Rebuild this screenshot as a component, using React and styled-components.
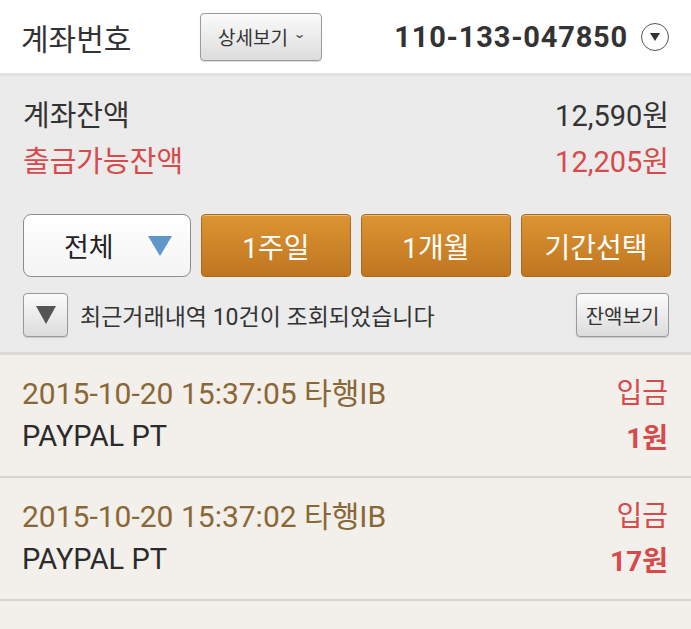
import React from "react";
import styled, { createGlobalStyle } from "styled-components";

const Global = createGlobalStyle`
  html, body {
    margin: 0;
    padding: 0;
    background: #f3efea;
    overflow: hidden;
  }
  body {
    font-family: Roboto, "Noto Sans CJK KR", sans-serif;
  }
`;

const Page = styled.div`
  width: 691px;
  height: 629px;
  overflow: hidden;
  background: #f3efea;
`;

const Header = styled.header`
  height: 73px;
  background: #fff;
  border-bottom: 3px solid #e2e2e2;
  display: flex;
  align-items: center;
  padding: 0 22px 0 21px;
`;

const Title = styled.h1`
  margin: 0;
  font-weight: 400;
  font-size: 30px;
  color: #333;
  width: 179px;
`;

const GrayButton = styled.button`
  font-family: inherit;
  display: flex;
  align-items: center;
  justify-content: center;
  gap: 6px;
  height: ${(p) => p.$h || 46}px;
  width: ${(p) => p.$w}px;
  padding: 0;
  border: 1px solid #9a9a9a;
  border-radius: 4px;
  background: linear-gradient(#fbfbfb, #dcdcdc);
  box-shadow: 0 1px 1px rgba(0, 0, 0, 0.15);
  color: #333;
  font-size: ${(p) => p.$fs || 19}px;
`;

const Chevron = styled.span`
  font-size: 12px;
  color: #444;
  transform: scaleX(1.3) translateY(-3px);
`;

const AccountNo = styled.div`
  margin-left: auto;
  display: flex;
  align-items: center;
  gap: 13px;
  font-size: 29px;
  font-weight: 700;
  color: #333;
  letter-spacing: 0.8px;
`;

const CircleIcon = styled.span`
  width: 28px;
  height: 28px;
  border: 1.5px solid #555;
  border-radius: 50%;
  display: flex;
  align-items: center;
  justify-content: center;
  box-sizing: border-box;
`;

const Summary = styled.section`
  background: #ebebeb;
  padding: 14px 22px 0 23px;
  border-bottom: 3px solid #dcdad6;
`;

const BalanceRow = styled.div`
  display: flex;
  justify-content: space-between;
  align-items: center;
  height: 46px;
  font-size: 29px;
  color: ${(p) => (p.$red ? "#d64a4c" : "#333")};
`;

const Filters = styled.div`
  display: grid;
  grid-template-columns: 168px 150px 150px 150px;
  gap: 10px;
  margin-top: 32px;
  height: 63px;
`;

const Select = styled.div`
  border: 1px solid #8d8d8d;
  border-radius: 8px;
  background: linear-gradient(#ffffff, #f4f4f4);
  display: flex;
  align-items: center;
  justify-content: space-between;
  padding: 0 18px 0 40px;
  font-size: 27px;
  color: #222;
`;

const OrangeButton = styled.button`
  font-family: inherit;
  border: 1px solid #b06a1a;
  border-radius: 4px;
  background: linear-gradient(#dc9533, #bf7520);
  color: #fff;
  font-size: 28px;
  padding: 0;
  box-shadow: inset 0 1px 0 rgba(255, 230, 180, 0.5);
`;

const InfoRow = styled.div`
  display: flex;
  align-items: center;
  height: 44px;
  margin: 16px 0 15px;
  gap: 12px;
  font-size: 23px;
  color: #333;
  & > :last-child {
    margin-left: auto;
  }
`;

const Item = styled.article`
  height: 123px;
  border-bottom: 2px solid #d6d3ce;
  padding: 13px 23px 0 22px;
  box-sizing: border-box;
`;

const Line = styled.div`
  display: flex;
  justify-content: space-between;
  align-items: center;
  height: ${(p) => (p.$first ? 46 : 44)}px;
`;

const DateText = styled.span`
  font-size: 30px;
  color: #8a6736;
`;

const Memo = styled.span`
  font-size: 29px;
  color: #2b2b2b;
`;

const Kind = styled.span`
  font-size: 28px;
  color: #d64a4c;
`;

const Amount = styled.span`
  font-size: 28px;
  font-weight: 700;
  color: #d64a4c;
`;

const items = [
  { date: "2015-10-20 15:37:05 타행IB", memo: "PAYPAL PT", kind: "입금", amount: "1원" },
  { date: "2015-10-20 15:37:02 타행IB", memo: "PAYPAL PT", kind: "입금", amount: "17원" },
];

export default function App() {
  return (
    <Page>
      <Global />
      <Header>
        <Title>계좌번호</Title>
        <GrayButton $w={122} $h={48} $fs={19}>
          상세보기 <Chevron>⌄</Chevron>
        </GrayButton>
        <AccountNo>
          110-133-047850
          <CircleIcon>
            <svg width="12" height="10" viewBox="0 0 12 10">
              <path d="M1 1 H11 L6 9 Z" fill="#333" />
            </svg>
          </CircleIcon>
        </AccountNo>
      </Header>

      <Summary>
        <BalanceRow>
          <span>계좌잔액</span>
          <span>12,590원</span>
        </BalanceRow>
        <BalanceRow $red>
          <span>출금가능잔액</span>
          <span>12,205원</span>
        </BalanceRow>

        <Filters>
          <Select>
            전체
            <svg width="24" height="20" viewBox="0 0 24 20">
              <path d="M0 0 H24 L12 20 Z" fill="#5f95c8" />
            </svg>
          </Select>
          <OrangeButton>1주일</OrangeButton>
          <OrangeButton>1개월</OrangeButton>
          <OrangeButton>기간선택</OrangeButton>
        </Filters>

        <InfoRow>
          <GrayButton $w={45} $h={44}>
            <svg width="20" height="18" viewBox="0 0 20 18">
              <path d="M0 0 H20 L10 18 Z" fill="#555" />
            </svg>
          </GrayButton>
          <span>최근거래내역 10건이 조회되었습니다</span>
          <GrayButton $w={93} $h={44} $fs={20}>
            잔액보기
          </GrayButton>
        </InfoRow>
      </Summary>

      {items.map((it, i) => (
        <Item key={i}>
          <Line $first>
            <DateText>{it.date}</DateText>
            <Kind>{it.kind}</Kind>
          </Line>
          <Line>
            <Memo>{it.memo}</Memo>
            <Amount>{it.amount}</Amount>
          </Line>
        </Item>
      ))}
    </Page>
  );
}
